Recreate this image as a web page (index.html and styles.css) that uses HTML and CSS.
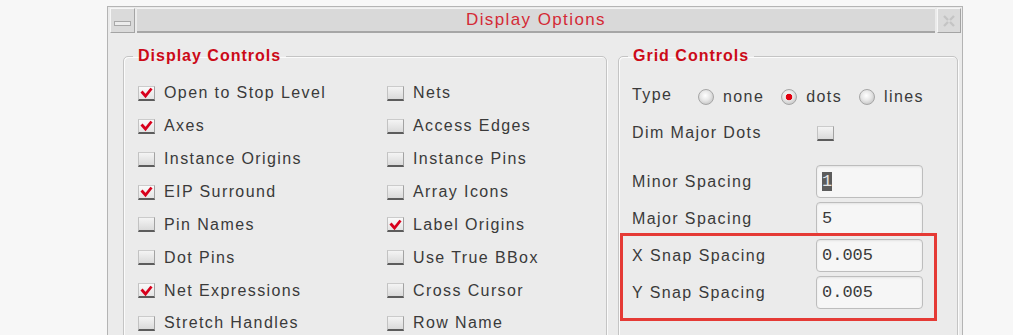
FILE: index.html
```html
<!DOCTYPE html>
<html>
<head>
    <link rel="stylesheet" href="styles.css">
</head>
<body>
    <div class="window">
        <div class="titlebar">
            <div class="tb-btn"><span class="tb-dash"></span></div>
            <div class="tb-title">Display Options</div>
            <div class="tb-btn">
                <svg width="16" height="16" viewBox="0 0 16 16">
                    <path d="M3 3 L7 7 M9 9 L13 13 M13 3 L9 7 M7 9 L3 13" stroke="#c4c4c4" stroke-width="2.4" fill="none"/>
                </svg>
            </div>
        </div>

        <div class="panels">
            <fieldset class="group display-group">
                <legend>Display Controls</legend>
                <div class="check-grid">
                    <div class="check"><span class="cb on"><svg width="15" height="13" viewBox="0 0 15 13"><path d="M2.5 5.5 L6.5 10 L12.5 2.5" stroke="#d8001c" stroke-width="2.8" fill="none"/></svg></span>Open to Stop Level</div>
                    <div class="check"><span class="cb on"><svg width="15" height="13" viewBox="0 0 15 13"><path d="M2.5 5.5 L6.5 10 L12.5 2.5" stroke="#d8001c" stroke-width="2.8" fill="none"/></svg></span>Axes</div>
                    <div class="check"><span class="cb"></span>Instance Origins</div>
                    <div class="check"><span class="cb on"><svg width="15" height="13" viewBox="0 0 15 13"><path d="M2.5 5.5 L6.5 10 L12.5 2.5" stroke="#d8001c" stroke-width="2.8" fill="none"/></svg></span>EIP Surround</div>
                    <div class="check"><span class="cb"></span>Pin Names</div>
                    <div class="check"><span class="cb"></span>Dot Pins</div>
                    <div class="check"><span class="cb on"><svg width="15" height="13" viewBox="0 0 15 13"><path d="M2.5 5.5 L6.5 10 L12.5 2.5" stroke="#d8001c" stroke-width="2.8" fill="none"/></svg></span>Net Expressions</div>
                    <div class="check"><span class="cb"></span>Stretch Handles</div>

                    <div class="check"><span class="cb"></span>Nets</div>
                    <div class="check"><span class="cb"></span>Access Edges</div>
                    <div class="check"><span class="cb"></span>Instance Pins</div>
                    <div class="check"><span class="cb"></span>Array Icons</div>
                    <div class="check"><span class="cb on"><svg width="15" height="13" viewBox="0 0 15 13"><path d="M2.5 5.5 L6.5 10 L12.5 2.5" stroke="#d8001c" stroke-width="2.8" fill="none"/></svg></span>Label Origins</div>
                    <div class="check"><span class="cb"></span>Use True BBox</div>
                    <div class="check"><span class="cb"></span>Cross Cursor</div>
                    <div class="check"><span class="cb"></span>Row Name</div>
                </div>
            </fieldset>

            <fieldset class="group grid-group">
                <legend>Grid Controls</legend>
                <div class="grid-body">
                    <div class="type-row">
                        <span class="type-label">Type</span>
                        <span class="opt"><span class="radio"></span>none</span>
                        <span class="opt"><span class="radio on"></span>dots</span>
                        <span class="opt"><span class="radio"></span>lines</span>
                    </div>
                    <div class="dim-row">
                        <span class="field-label">Dim Major Dots</span>
                        <span class="cb dim-cb"></span>
                    </div>
                    <div class="field-row minor-row">
                        <span class="field-label">Minor Spacing</span>
                        <span class="field"><span class="sel">1</span></span>
                    </div>
                    <div class="field-row">
                        <span class="field-label">Major Spacing</span>
                        <span class="field">5</span>
                    </div>
                    <div class="snap-box">
                        <div class="field-row">
                            <span class="field-label">X Snap Spacing</span>
                            <span class="field">0.005</span>
                        </div>
                        <div class="field-row">
                            <span class="field-label">Y Snap Spacing</span>
                            <span class="field">0.005</span>
                        </div>
                    </div>
                </div>
            </fieldset>
        </div>
    </div>
</body>
</html>
```

FILE: styles.css
```css
html, body {
    overflow: hidden;
}
body {
    margin: 0;
    padding: 6px 0 0 107px;
    background: #f7f7f7;
    font-family: "Liberation Sans", Arial, sans-serif;
    color: #3a3a3a;
}
.window {
    width: 856px;
    height: 329px;
    box-sizing: border-box;
    border: 1px solid #b4b4b4;
    border-bottom: none;
    background: #ebebeb;
    overflow: hidden;
}

/* title bar */
.titlebar {
    display: flex;
    gap: 2px;
    height: 25px;
    margin: 1px 1px 0 2px;
}
.tb-btn {
    width: 25px;
    box-sizing: border-box;
    border: 1px solid;
    border-color: #f6f6f6 #a4a4a4 #a4a4a4 #f6f6f6;
    background: #dadada;
    display: flex;
    align-items: center;
    justify-content: center;
}
.tb-btn:last-child { width: 24px; }
.tb-dash {
    width: 15px;
    height: 3px;
    margin-top: 5px;
    border: 1px solid #a8a8a8;
    background: #ececec;
}
.tb-title {
    flex: 1;
    background: #d9d9d9;
    border-top: 1px solid #f2f2f2;
    border-bottom: 2px solid #a6a6a6;
    text-align: center;
    color: #d42a36;
    font-size: 17px;
    line-height: 22px;
    letter-spacing: 1.4px;
}

/* group frames */
.panels {
    display: flex;
    gap: 11px;
    padding: 14px 0 0 15px;
}
.group {
    margin: 0;
    padding: 0;
    min-width: 0;
    box-sizing: border-box;
    border: 1px solid #c4c4c4;
    border-radius: 5px;
    box-shadow: inset 1px 1px 0 #fbfbfb, 1px 1px 0 #fbfbfb;
}
.group legend {
    margin-left: 9px;
    padding: 0 5px;
    font-weight: bold;
    font-size: 16px;
    line-height: 18px;
    color: #cc0a18;
    letter-spacing: 1px;
}
.display-group { width: 484px; }
.grid-group { width: 340px; }

/* checkboxes */
.check-grid {
    display: grid;
    grid-template-columns: 249px auto;
    grid-template-rows: repeat(8, 32.86px);
    grid-auto-flow: column;
    padding: 12px 0 0 14px;
}
.check {
    display: flex;
    align-items: center;
    gap: 9px;
    font-size: 16px;
    letter-spacing: 1.4px;
}
.cb {
    width: 17px;
    height: 15px;
    box-sizing: border-box;
    border: 1px solid;
    border-color: #cbcbcb #a2a2a2 #5c5c5c #c2c2c2;
    border-bottom-width: 2px;
    background: linear-gradient(#f4f4f4, #dadada);
    display: flex;
    align-items: center;
    justify-content: center;
}
.cb.on { background: linear-gradient(#fafafa, #e4e4e4); }

/* grid controls */
.grid-body {
    display: flex;
    flex-direction: column;
    padding: 16px 14px 8px 13px;
    font-size: 16px;
    letter-spacing: 1.4px;
}
.type-row {
    display: flex;
    align-items: center;
    height: 32px;
}
.type-label {
    width: 66px;
    margin-top: -5px;
}
.opt {
    display: flex;
    align-items: center;
    gap: 9px;
    margin-right: 17px;
}
.radio {
    width: 16px;
    height: 16px;
    box-sizing: border-box;
    border-radius: 50%;
    border: 1px solid #a6a6a6;
    background: radial-gradient(circle at 45% 40%, #ffffff 0, #e6e6e6 45%, #b4b4b4 100%);
}
.radio.on {
    background:
        radial-gradient(circle at 50% 50%, #e2000f 0, #e2000f 3px, transparent 3.6px),
        radial-gradient(circle at 45% 40%, #ffffff 0, #e6e6e6 45%, #b4b4b4 100%);
}
.dim-row {
    display: flex;
    align-items: center;
    height: 32px;
    margin-top: 4px;
}
.dim-cb { margin-left: 1px; }
.field-row {
    display: flex;
    align-items: center;
    height: 33px;
    margin-top: 4px;
}
.minor-row { margin-top: 16px; }
.field-label { width: 184px; }
.field {
    width: 107px;
    height: 33px;
    box-sizing: border-box;
    border: 1px solid #bdbdbd;
    border-radius: 4px;
    background: #f6f6f6;
    box-shadow: inset 0 1px 2px rgba(0, 0, 0, 0.08);
    padding-left: 5px;
    display: flex;
    align-items: center;
    font-family: "Liberation Mono", "Courier New", monospace;
    font-size: 17px;
    letter-spacing: 0;
    color: #3a3a3a;
}
.sel {
    background: #5c5c5c;
    color: #e4e4e4;
    line-height: 19px;
}
.snap-box {
    margin: -2px 6px 0 -12px;
    border: 3px solid #e53a35;
    padding: 3px 0 9px 9px;
}
.snap-box .field-row:first-child { margin-top: 0; }
```
